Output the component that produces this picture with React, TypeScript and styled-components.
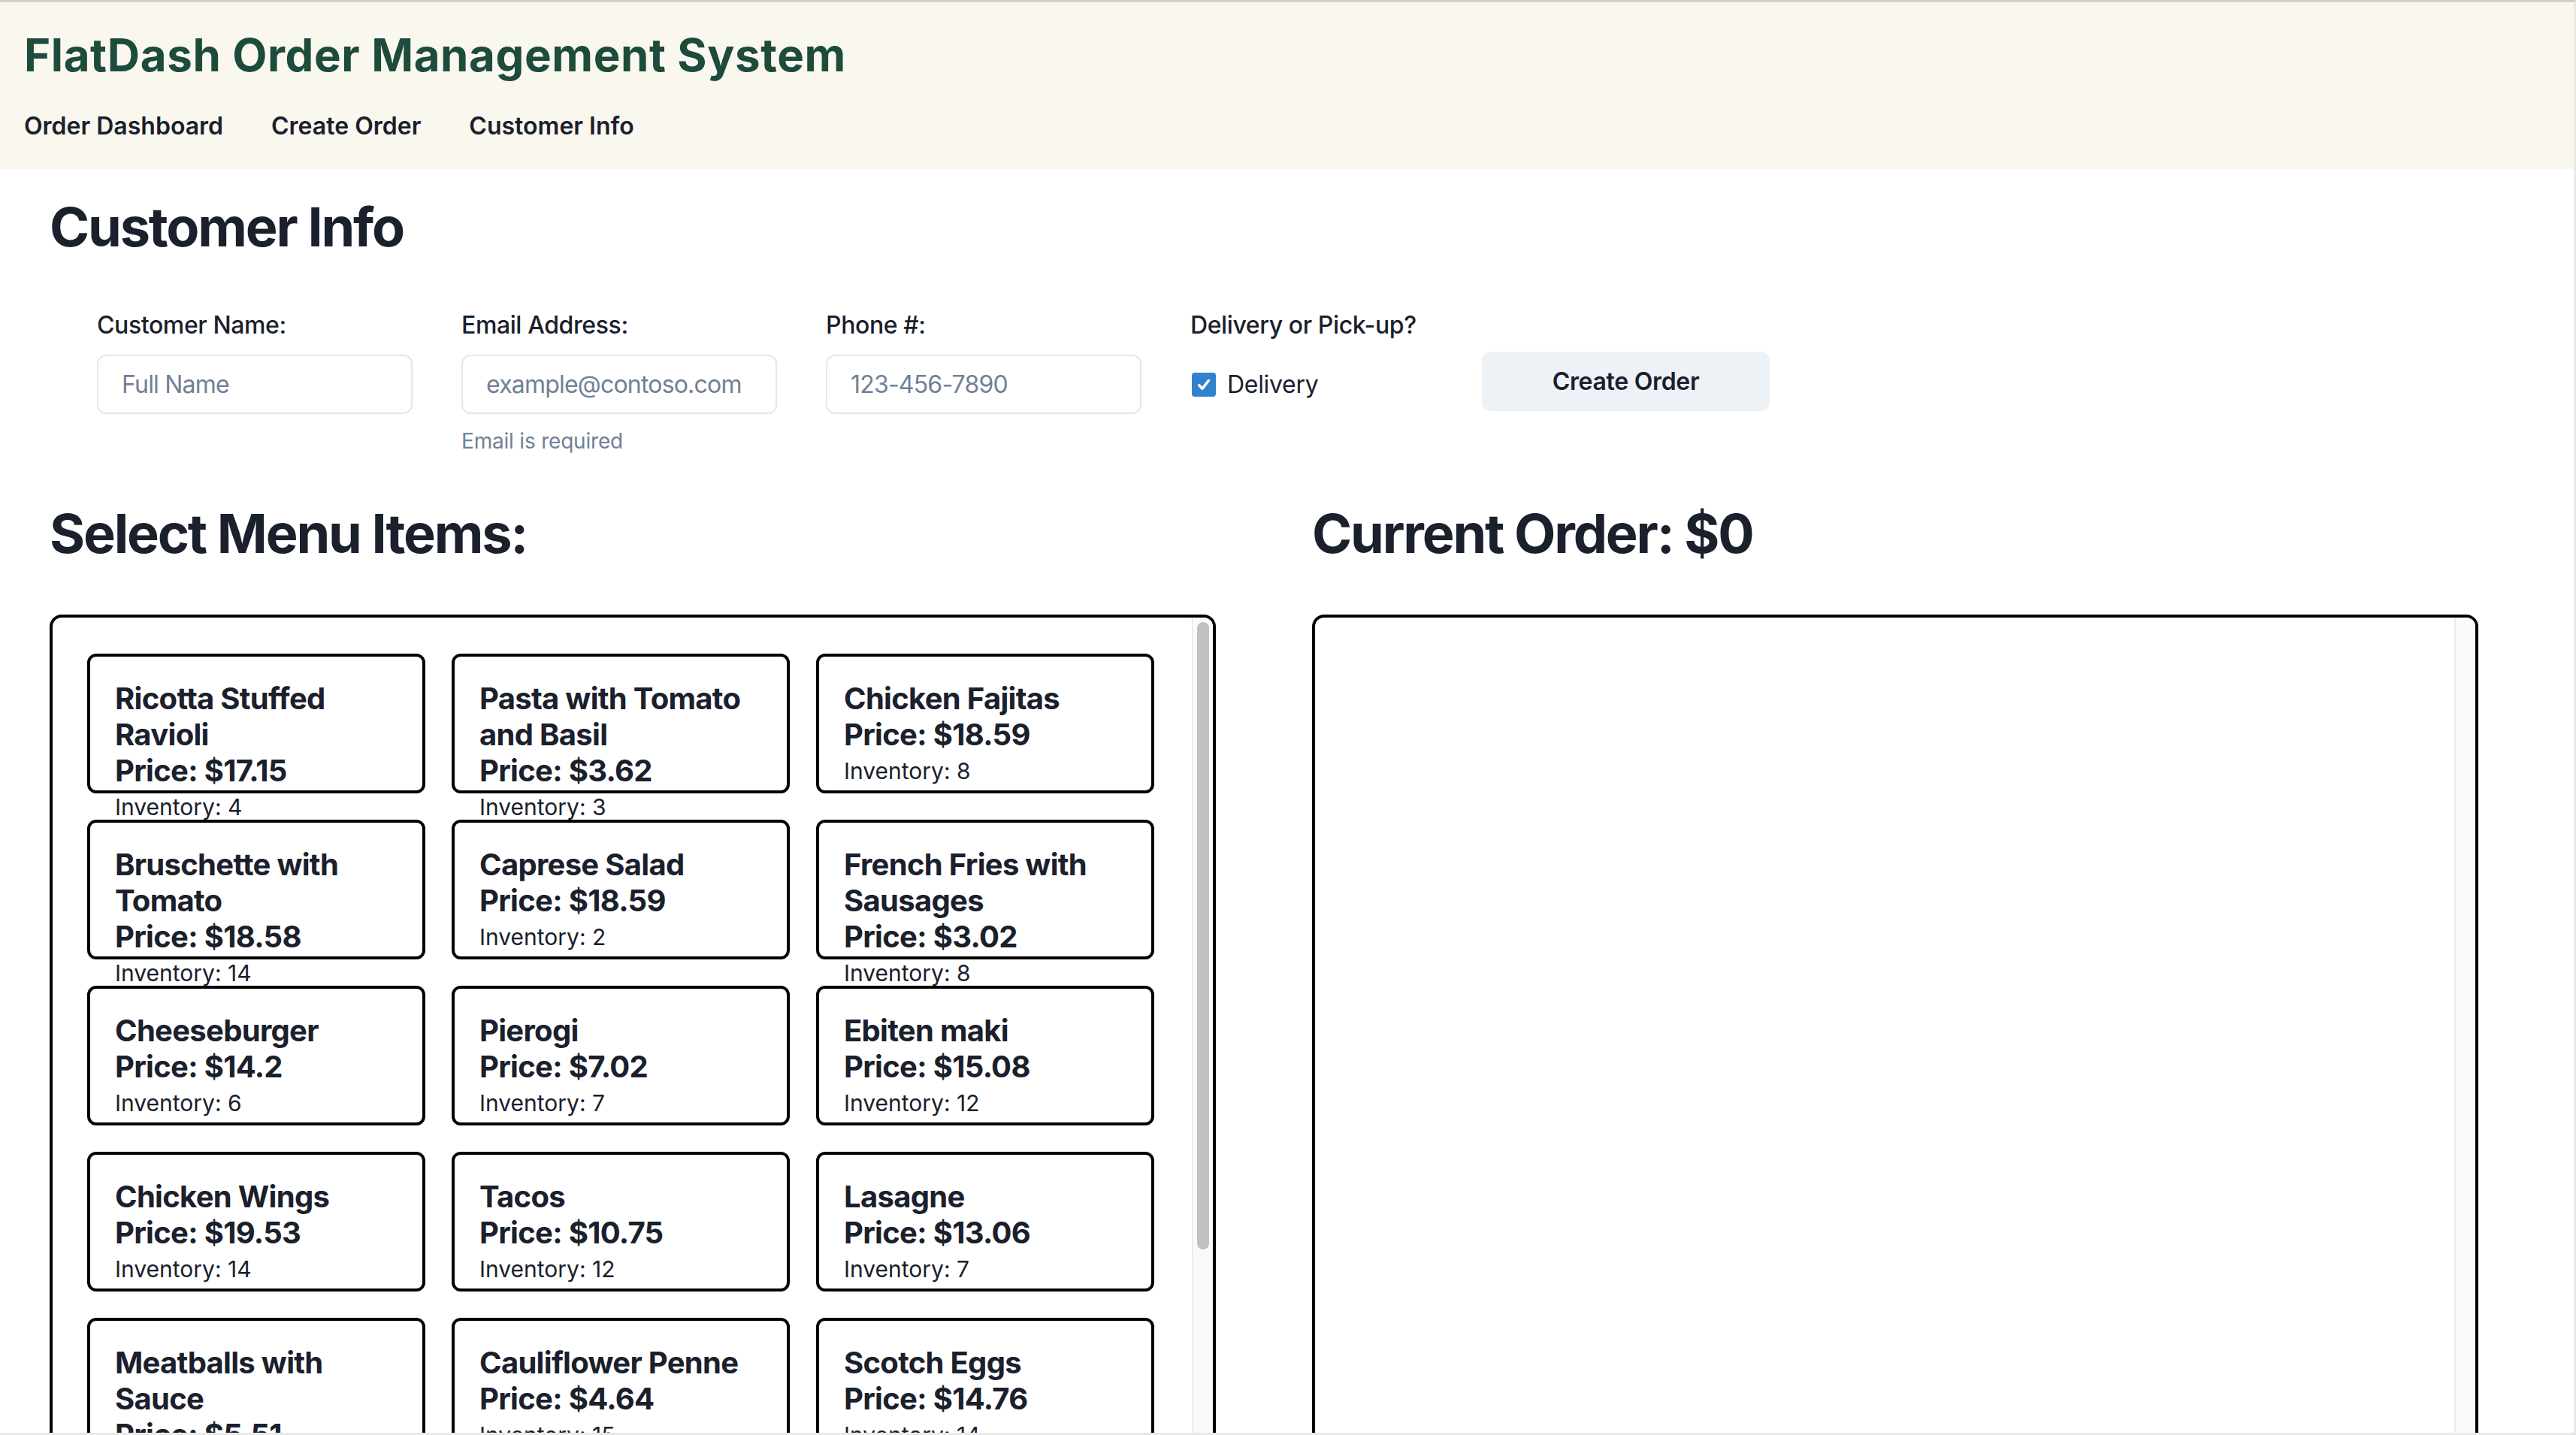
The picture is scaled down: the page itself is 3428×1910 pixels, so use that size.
import React from "react";
import styled, { createGlobalStyle } from "styled-components";

const GlobalStyle = createGlobalStyle`
  html, body {
    margin: 0;
    padding: 0;
    background: #ffffff;
    overflow: hidden;
  }
  body {
    font-family: Inter, "Noto Sans", "Liberation Sans", sans-serif;
    color: #1a202c;
  }
  * { box-sizing: border-box; }
`;

const Frame = styled.div`
  position: fixed;
  inset: 0;
  pointer-events: none;
  border-top: 3px solid #d0d0d0;
  border-right: 3px solid #e9e9e9;
  border-bottom: 3px solid #e9e9e9;
  z-index: 10;
`;

const Header = styled.header`
  background: #faf7ef;
  height: 225px;
  padding: 37px 32px 0;
`;

const Title = styled.h1`
  margin: 0;
  font-size: 60px;
  line-height: 72px;
  font-weight: 700;
  letter-spacing: 0.6px;
  color: #1d4b3c;
`;

const Nav = styled.nav`
  display: flex;
  gap: 64px;
  margin-top: 35px;
`;

const NavLink = styled.a`
  font-size: 32px;
  line-height: 48px;
  font-weight: 600;
  color: #1a202c;
  text-decoration: none;
`;

const Main = styled.main`
  padding: 34px 66px 0;
`;

const PageHeading = styled.h2<{ $gap?: number }>`
  margin: 0 0 ${(p) => p.$gap ?? 0}px;
  font-size: 72px;
  line-height: 86px;
  font-weight: 700;
  letter-spacing: -2.2px;
  color: #1a202c;
`;

const Form = styled.div`
  display: flex;
  gap: 65px;
  margin-top: 64px;
  padding-left: 63px;
`;

const Field = styled.div<{ $width: number }>`
  display: flex;
  flex-direction: column;
  width: ${(p) => p.$width}px;
`;

const Label = styled.label`
  font-size: 32px;
  line-height: 48px;
  font-weight: 500;
  letter-spacing: -0.4px;
  margin-bottom: 15px;
  white-space: nowrap;
`;

const Input = styled.input`
  height: 79px;
  width: 100%;
  border: 2px solid #e2e8f0;
  border-radius: 12px;
  padding: 0 31px;
  font-family: inherit;
  font-size: 32px;
  letter-spacing: -0.8px;
  color: #1a202c;
  background: #ffffff;
  outline: none;
  &::placeholder {
    color: #718096;
  }
`;

const Helper = styled.div`
  margin-top: 16px;
  font-size: 28px;
  line-height: 40px;
  letter-spacing: -0.2px;
  color: #718096;
`;

const CheckRow = styled.label`
  height: 79px;
  display: flex;
  align-items: center;
  gap: 15px;
  font-size: 32px;
  line-height: 48px;
  letter-spacing: -0.3px;
`;

const CheckBox = styled.span`
  width: 32px;
  height: 32px;
  margin-left: 2px;
  border-radius: 4px;
  background: #3182ce;
  display: flex;
  align-items: center;
  justify-content: center;
`;

const ButtonSlot = styled.div`
  padding-top: 59px;
`;

const Button = styled.button`
  width: 383px;
  height: 79px;
  border: none;
  border-radius: 12px;
  background: #edf2f7;
  font-family: inherit;
  font-size: 32px;
  font-weight: 600;
  letter-spacing: -0.3px;
  color: #1a202c;
`;

const Columns = styled.div`
  display: grid;
  grid-template-columns: 1552px 1552px;
  column-gap: 128px;
  margin-top: 60px;
`;

const Column = styled.section`
  display: flex;
  flex-direction: column;
`;

const Panel = styled.div`
  height: 1244px;
  border: 4px solid #000000;
  border-radius: 16px;
  overflow: hidden;
  display: flex;
`;

const Scroller = styled.div`
  flex: 1;
  min-width: 0;
  overflow: hidden;
  padding: 48px 46px;
`;

const ScrollTrack = styled.div`
  width: 28px;
  flex-shrink: 0;
  background: #fafafa;
  border-left: 2px solid #ececec;
  border-right: 1px solid #f0f0f0;
  padding-top: 6px;
  display: flex;
  justify-content: center;
`;

const ScrollThumb = styled.div<{ $length: number }>`
  width: 16px;
  height: ${(p) => p.$length}px;
  border-radius: 8px;
  background: #c1c1c1;
`;

const MenuGrid = styled.div`
  display: grid;
  grid-template-columns: repeat(3, 450px);
  grid-auto-rows: 186px;
  gap: 35px;
`;

const Card = styled.div`
  height: 186px;
  border: 4px solid #000000;
  border-radius: 12px;
  padding: 32px 33px;
  cursor: pointer;
`;

const CardHeading = styled.div`
  font-size: 40px;
  line-height: 48px;
  font-weight: 700;
  letter-spacing: -0.7px;
  color: #1a202c;
`;

const Inventory = styled.div`
  font-size: 30px;
  line-height: 48px;
  font-weight: 400;
  color: #1a202c;
`;

type Item = { name: string; price: number; inventory: number };

const MENU: Item[] = [
  { name: "Ricotta Stuffed Ravioli", price: 17.15, inventory: 4 },
  { name: "Pasta with Tomato and Basil", price: 3.62, inventory: 3 },
  { name: "Chicken Fajitas", price: 18.59, inventory: 8 },
  { name: "Bruschette with Tomato", price: 18.58, inventory: 14 },
  { name: "Caprese Salad", price: 18.59, inventory: 2 },
  { name: "French Fries with Sausages", price: 3.02, inventory: 8 },
  { name: "Cheeseburger", price: 14.2, inventory: 6 },
  { name: "Pierogi", price: 7.02, inventory: 7 },
  { name: "Ebiten maki", price: 15.08, inventory: 12 },
  { name: "Chicken Wings", price: 19.53, inventory: 14 },
  { name: "Tacos", price: 10.75, inventory: 12 },
  { name: "Lasagne", price: 13.06, inventory: 7 },
  { name: "Meatballs with Sauce", price: 5.51, inventory: 9 },
  { name: "Cauliflower Penne", price: 4.64, inventory: 15 },
  { name: "Scotch Eggs", price: 14.76, inventory: 14 },
  { name: "Fish and Chips", price: 11.4, inventory: 5 },
  { name: "Pizza Margherita", price: 9.99, inventory: 10 },
  { name: "Pad Thai", price: 12.35, inventory: 6 },
  { name: "Tiramisu", price: 6.5, inventory: 11 },
  { name: "Mushroom Risotto", price: 16.2, inventory: 3 },
  { name: "Chicken Curry", price: 13.75, inventory: 9 },
  { name: "Greek Salad", price: 8.45, inventory: 13 },
  { name: "Beef Burrito", price: 10.1, inventory: 4 },
  { name: "Apple Pie", price: 5.25, inventory: 8 },
];

function MenuCard({ item }: { item: Item }) {
  return (
    <Card>
      <CardHeading>{item.name}</CardHeading>
      <CardHeading>Price: ${item.price}</CardHeading>
      <Inventory>Inventory: {item.inventory}</Inventory>
    </Card>
  );
}

export default function App() {
  return (
    <>
      <GlobalStyle />
      <Frame />
      <Header>
        <Title>FlatDash Order Management System</Title>
        <Nav>
          <NavLink href="#">Order Dashboard</NavLink>
          <NavLink href="#">Create Order</NavLink>
          <NavLink href="#">Customer Info</NavLink>
        </Nav>
      </Header>
      <Main>
        <PageHeading>Customer Info</PageHeading>
        <Form>
          <Field $width={420}>
            <Label>Customer Name:</Label>
            <Input placeholder="Full Name" />
          </Field>
          <Field $width={420}>
            <Label>Email Address:</Label>
            <Input placeholder="example@contoso.com" />
            <Helper>Email is required</Helper>
          </Field>
          <Field $width={420}>
            <Label>Phone #:</Label>
            <Input placeholder="123-456-7890" />
          </Field>
          <Field $width={323}>
            <Label>Delivery or Pick-up?</Label>
            <CheckRow>
              <CheckBox>
                <svg width="22" height="22" viewBox="0 0 12 12" fill="none">
                  <path d="M2.6 6.4 L4.9 8.9 L9.5 3" stroke="#ffffff" strokeWidth="1.9" strokeLinecap="round" strokeLinejoin="round" />
                </svg>
              </CheckBox>
              Delivery
            </CheckRow>
          </Field>
          <ButtonSlot>
            <Button>Create Order</Button>
          </ButtonSlot>
        </Form>
        <Columns>
          <Column>
            <PageHeading $gap={65}>Select Menu Items:</PageHeading>
            <Panel>
              <Scroller>
                <MenuGrid>
                  {MENU.map((item) => (
                    <MenuCard key={item.name} item={item} />
                  ))}
                </MenuGrid>
              </Scroller>
              <ScrollTrack>
                <ScrollThumb $length={835} />
              </ScrollTrack>
            </Panel>
          </Column>
          <Column>
            <PageHeading $gap={65}>Current Order: $0</PageHeading>
            <Panel>
              <Scroller />
              <ScrollTrack />
            </Panel>
          </Column>
        </Columns>
      </Main>
    </>
  );
}
